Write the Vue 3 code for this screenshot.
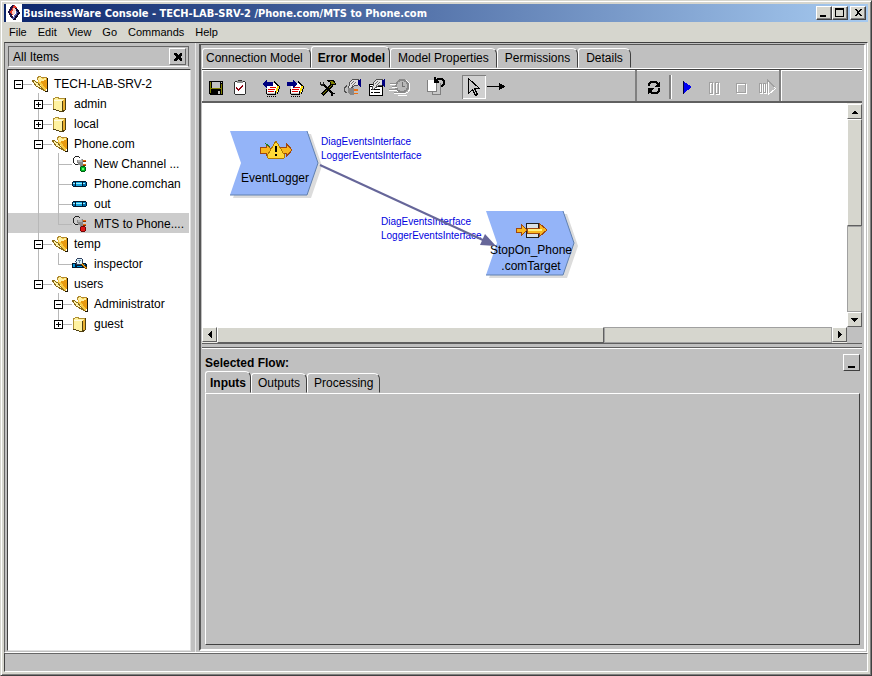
<script setup>
import { ref } from 'vue'

const menus = ['File', 'Edit', 'View', 'Go', 'Commands', 'Help']
const tabs = ['Connection Model', 'Error Model', 'Model Properties', 'Permissions', 'Details']
const flowTabs = ['Inputs', 'Outputs', 'Processing']
const activeTab = ref('Error Model')
const activeFlow = ref('Inputs')
const selected = ref('MTS to Phone....')

// guides: one entry per indent column; v = through line, end = last child, tee = child, none = blank
const tree = [
  { label: 'TECH-LAB-SRV-2', icon: 'open', box: 'minus', guides: ['root'] },
  { label: 'admin', icon: 'closed', box: 'plus', guides: ['none', 'tee'] },
  { label: 'local', icon: 'closed', box: 'plus', guides: ['none', 'tee'] },
  { label: 'Phone.com', icon: 'open', box: 'minus', guides: ['none', 'tee'] },
  { label: 'New Channel ...', icon: 'plug-on', guides: ['none', 'v', 'tee'] },
  { label: 'Phone.comchan', icon: 'pipe', guides: ['none', 'v', 'tee'] },
  { label: 'out', icon: 'pipe', guides: ['none', 'v', 'tee'] },
  { label: 'MTS to Phone....', icon: 'plug-off', guides: ['none', 'v', 'end'] },
  { label: 'temp', icon: 'open', box: 'minus', guides: ['none', 'tee'] },
  { label: 'inspector', icon: 'inspect', guides: ['none', 'v', 'end'] },
  { label: 'users', icon: 'open', box: 'minus', guides: ['none', 'end'] },
  { label: 'Administrator', icon: 'open', box: 'minus', guides: ['none', 'none', 'tee'] },
  { label: 'guest', icon: 'closed', box: 'plus', guides: ['none', 'none', 'end'] }
]

const toolGroups = [
  [{ id: 'save', name: 'Save' }, { id: 'check', name: 'Validate' }],
  [{ id: 'import', name: 'Import' }, { id: 'export', name: 'Export' }],
  [{ id: 'tools', name: 'Build' }, { id: 'connect', name: 'Connect' }, { id: 'props', name: 'Properties' }, { id: 'clock', name: 'Schedule' }],
  [{ id: 'revert', name: 'Revert' }],
  [{ id: 'pointer', name: 'Select', pressed: true }, { id: 'wire', name: 'Wire' }]
]
const runTools = [
  { id: 'play', name: 'Start' },
  { id: 'pause', name: 'Pause' },
  { id: 'stop', name: 'Stop' },
  { id: 'step', name: 'Step' }
]
</script>

<template>
  <svg class="sprite" aria-hidden="true">
    <symbol id="i-open" viewBox="0 0 18 18">
      <path d="M6 3l3-2 2 1 1 1 4-1v11l-1 3-6-4z" fill="#f8c840" />
      <path d="M9 5l7-2v12l-3-3z" fill="#e89a10" />
      <path d="M7 3l2-1 2 2 4-1v2l-7 2z" fill="#fff0a0" />
      <path d="M1 5l6 2 7 9-3-1-4-2z" fill="#fff4a8" />
      <path d="M1 5h1l5 3 3 4 4 4M1 5l4 6 9 5" fill="none" stroke="#8a6a18" />
      <path d="M6 5V3l3-2 2 2 5-1" fill="none" stroke="#b08a30" />
      <path d="M16 3v13h-2" fill="none" stroke="#201808" stroke-width="1" />
    </symbol>
    <symbol id="i-closed" viewBox="0 0 18 18">
      <path d="M2 4l4-2 3 2 5-1v12l-3 2-9-3z" fill="#fff2a0" />
      <path d="M2 14V4l4-2 3 2 5-1" fill="none" stroke="#b09030" />
      <path d="M11 6l3-3v12l-3 2z" fill="#e8b030" />
      <path d="M2 14l9 3M11 6v11M11 17l3-2V3" fill="none" stroke="#504010" />
      <path d="M3 5l8 1" fill="none" stroke="#fffbe0" />
    </symbol>
    <symbol id="i-plug" viewBox="0 0 18 18">
      <path d="M4 1h4v1H4zM3 2h1v1H3zM2 3h1v5H2zM3 8h1v1H3zM4 9h3v1H4zM8 2h1v1H8z" fill="#202020" />
      <path d="M6 5h4V4h2v8H9v-2H7V8H6z" fill="#888" />
      <path d="M7 5h3V4h1v3H7z" fill="#b4b4b4" />
      <path d="M12 5h3v1h-3zM12 9h3v1h-3z" fill="#f07010" />
      <path d="M12 6h3v1h-3zM12 10h3v1h-3z" fill="#803000" />
    </symbol>
    <symbol id="i-plug-on" viewBox="0 0 18 18">
      <use href="#i-plug" width="18" height="18" />
      <path d="M10 11h4v1h1v4h-1v1h-4v-1H9v-4h1z" fill="#006010" />
      <path d="M10 12h4v4h-4z" fill="#00b828" />
      <path d="M11 13h2v2h-2z" fill="#60ff60" />
    </symbol>
    <symbol id="i-plug-off" viewBox="0 0 18 18">
      <use href="#i-plug" width="18" height="18" />
      <path d="M10 11h4v1h1v4h-1v1h-4v-1H9v-4h1z" fill="#700808" />
      <path d="M10 12h4v4h-4z" fill="#e01818" />
    </symbol>
    <symbol id="i-pipe" viewBox="0 0 18 18">
      <path d="M2 6h13v1h1v4h-1v1H2v-1H1V7h1z" fill="#001830" />
      <path d="M2 7h2v4H2zM12 7h3v4h-3z" fill="#0070b0" />
      <path d="M5 7h6v4H5z" fill="#18a8e0" />
      <path d="M5 8h6v1H5zM2 8h2v1H2zM12 8h2v1h-2z" fill="#98f0ff" />
    </symbol>
    <symbol id="i-inspect" viewBox="0 0 18 18">
      <path d="M1 8h14v1h1v4H1z" fill="#001830" />
      <path d="M2 9h2v3H2zM12 9h2v3h-2zM6 11h5v1H6z" fill="#0098e0" />
      <circle cx="8.500" cy="6.500" r="3.500" fill="#d8f0f8" stroke="#304060" />
      <path d="M7 5h3v1H9v2H8V6H7z" fill="#6888a8" />
      <path d="M11 9l5 5" stroke="#805000" stroke-width="2" />
      <path d="M11 9l4 4" stroke="#ffb030" />
    </symbol>

    <symbol id="i-save" viewBox="0 0 24 24">
      <path d="M5 6h14v14H6l-1-1z" fill="#000" />
      <path d="M6 7h1v11H6zM17 9h1v10h-1zM7 13h10v1H7z" fill="#808000" />
      <path d="M8 7h8v6H8zM17 7h1v1h-1zM14 16h2v3h-2z" fill="#c0c0c0" />
    </symbol>
    <symbol id="i-check" viewBox="0 0 24 24">
      <path d="M7 6h10v1h1v12h-1v1H7v-1H6V7h1z" fill="#303030" />
      <path d="M7 7h10v12H7z" fill="#fff" />
      <path d="M9 6h6v2H9z" fill="#909090" />
      <path d="M10 5h4v1h-4z" fill="#303030" />
      <path d="M8 12h1v1h1v1h1v-1h1v-1h1v-1h1v-1h1v2h-1v1h-1v1h-1v1h-1v1h-1v-1H9v-1H8z" fill="#900010" />
    </symbol>
    <symbol id="i-sheet" viewBox="0 0 24 24">
      <path d="M8 8h9l2 3v7H8z" fill="#fff" />
      <path d="M15 6h1v1h1v1h1v1h1v1h1v1h-2v-1h-1V9h-1V8h-1zM7 14h1v5H7zM8 19h9v1H8z" fill="#000" />
      <path d="M8 21h1v1H8zM10 21h1v1h-1zM12 21h1v1h-1zM14 21h1v1h-1zM16 21h1v1h-1z" fill="#000" />
      <path d="M11 12h6v1h-6zM9 14h7v1H9zM9 16h6v1H9z" fill="#e00000" />
      <path d="M18 11h2v2h-1v3h-1v2h-1v1h-1v-3h1v-3h1z" fill="#ffe000" />
      <path d="M20 11h1v3h-1zM19 14h1v3h-1zM18 17h1v2h-1zM16 16h1v3h-1z" fill="#000" />
    </symbol>
    <symbol id="i-import" viewBox="0 0 24 24">
      <use href="#i-sheet" width="24" height="24" />
      <path d="M4 9l4-5v3h6v4H8v3z" fill="#000080" />
    </symbol>
    <symbol id="i-export" viewBox="0 0 24 24">
      <use href="#i-sheet" width="24" height="24" />
      <path d="M14 9l-4-5v3H4v4h6v3z" fill="#000080" />
    </symbol>
    <symbol id="i-tools" viewBox="0 0 24 24">
      <path d="M6 20L16 10" stroke="#000" stroke-width="3" />
      <path d="M7 19l9-9" stroke="#808000" />
      <path d="M11 5h6l3 4-1 1-2-1-2 1-1-3z" fill="#808000" stroke="#000" />
      <path d="M8 10l9 9" stroke="#000" stroke-width="2" />
      <path d="M4 7h1v2h2V7h1v3H7v1H5v-1H4z" fill="#202020" />
      <path d="M15 18h4v1h-2v2h-2z" fill="#000" />
    </symbol>
    <symbol id="i-hand" viewBox="0 0 24 24">
      <path d="M9 8l4-4h5v6l-4 1-4 3H8v-2l2-2z" fill="#e0e0e0" stroke="#505050" />
      <path d="M11 9l3-3M12 11l4-4" stroke="#707070" />
      <path d="M18 5l3-1v8h-1l-2-2z" fill="#000080" />
    </symbol>
    <symbol id="i-connect" viewBox="0 0 24 24">
      <use href="#i-hand" width="24" height="24" />
      <path d="M7 10H6v1H5v1H4v4h1v1h2" fill="none" stroke="#505050" />
      <path d="M8 13h6v7h-3l-3-2z" fill="#888" />
      <path d="M14 14h4v2h-4zM14 18h4v1h-4z" fill="#f07010" />
    </symbol>
    <symbol id="i-props" viewBox="0 0 24 24">
      <path d="M5 9h14v12H5z" fill="#000" />
      <path d="M6 12h12v8H6z" fill="#fff" />
      <path d="M7 14h2v1H7zM10 14h6v1h-6zM7 17h2v1H7zM10 17h6v1h-6z" fill="#000" />
      <path d="M6 10h3v1H6z" fill="#fff" />
      <use href="#i-hand" width="24" height="24" />
    </symbol>
    <symbol id="i-clock" viewBox="0 0 24 24">
      <circle cx="15" cy="12" r="7" fill="#b0b0b0" stroke="#fff" />
      <circle cx="14" cy="11" r="6" fill="#b8b8b8" stroke="#888" stroke-width="2" />
      <path d="M14 7v4l3 1" fill="none" stroke="#707070" />
      <path d="M2 8h6v1H2zM4 11h5v1H4zM1 14h8v1H1zM6 17h6v1H6z" fill="#909090" />
      <path d="M2 9h6v1H2zM4 12h5v1H4zM1 15h8v1H1zM6 18h6v1H6zM10 20h9v1h-9z" fill="#fff" />
    </symbol>
    <symbol id="i-revert" viewBox="0 0 24 24">
      <path d="M8 8h9v12H8z" fill="#808080" />
      <path d="M9 8h7v11H9z" fill="#c8c8c8" />
      <path d="M3 5h10v12H3z" fill="#808080" />
      <path d="M4 5h8v11H4z" fill="#fff" />
      <path d="M13 3h6v1h1v1h1v5h-1v1h-1v1h-2v-2h1V9h1V6h-1V5h-5z" fill="#000" />
      <path d="M10 2h2v2h1v1h1v1h1v2h-5z" fill="#000" />
    </symbol>
    <symbol id="i-pointer" viewBox="0 0 24 24">
      <path d="M6.500 3.500v15l4-4 3 6 2-1-3-6h5z" fill="#c8c8c8" stroke="#000" />
    </symbol>
    <symbol id="i-wire" viewBox="0 0 24 24">
      <path d="M1 11h13v1H1zM13 8l6 3v1l-6 3z" fill="#000" />
    </symbol>
    <symbol id="i-refresh" viewBox="0 0 24 24">
      <path d="M7 11V9l2-2h5l2 2M17 13v3l-2 2h-5l-2-2" fill="none" stroke="#000" stroke-width="2" />
      <path d="M18 6v6h-6zM6 19v-6h6z" fill="#000" />
    </symbol>
    <symbol id="i-play" viewBox="0 0 24 24">
      <path d="M8 6l9 6-9 7z" fill="#0000f0" />
      <path d="M8 6h1v13H8z" fill="#000040" />
    </symbol>
    <symbol id="i-pause" viewBox="0 0 24 24">
      <path d="M8.500 8.500h3v11h-3zM14.500 8.500h3v11h-3z" fill="none" stroke="#fff" />
      <path d="M7.500 7.500h3v11h-3zM13.500 7.500h3v11h-3z" fill="none" stroke="#a0a0a0" />
    </symbol>
    <symbol id="i-stop" viewBox="0 0 24 24">
      <path d="M8.500 9.500h9v9h-9z" fill="none" stroke="#fff" />
      <path d="M7.500 8.500h9v9h-9z" fill="none" stroke="#a0a0a0" />
    </symbol>
    <symbol id="i-step" viewBox="0 0 24 24">
      <path d="M4.500 9.500h2v9h-2zM8.500 9.500h2v9h-2z" fill="none" stroke="#fff" />
      <path d="M3.500 8.500h2v9h-2zM7.500 8.500h2v9h-2z" fill="none" stroke="#a0a0a0" />
      <path d="M12.500 6.500v13l7-6z" fill="none" stroke="#fff" />
      <path d="M11.500 18v-13l7 7" fill="none" stroke="#a0a0a0" />
    </symbol>
    <symbol id="i-alert" viewBox="0 0 34 20">
      <path d="M1 7h6V4l6 6-6 6v-3H1z" fill="#f8b820" stroke="#a04810" />
      <path d="M21 7h6V3l6 7-6 7v-4h-6z" fill="#f8b820" stroke="#a04810" />
      <path d="M6 3l5 4" stroke="#208020" />
      <path d="M17 1l9 15-1 2H9l-1-2z" fill="#ffd838" stroke="#b07800" stroke-linejoin="round" />
      <path d="M16 6h2v6h-2zM16 14h2v2h-2z" fill="#000" />
    </symbol>
    <symbol id="i-target" viewBox="0 0 34 20">
      <path d="M12 3h12v14H12z" fill="#d8e0e8" stroke="#202020" />
      <path d="M2 8h5V4l6 6-6 6v-4H2z" fill="#f8b820" stroke="#a04810" />
      <path d="M13 8h12V3l8 7-8 7v-4H13z" fill="#f8b820" stroke="#a04810" />
      <path d="M14 10h14" stroke="#fff080" stroke-width="2" />
    </symbol>
  </svg>

  <div class="window">
    <header class="titlebar">
      <svg class="logo" viewBox="0 0 16 18" aria-hidden="true">
        <rect width="16" height="18" fill="#fff" />
        <path d="M8 1l3 2-4 5-1 6-3-5z" fill="#e03828" />
        <path d="M7 1L3 8l4 7" fill="none" stroke="#201040" stroke-width="2" />
        <path d="M10 3l4 6-6 8-2-2 4-6z" fill="#5860b0" />
        <path d="M10 4l3 5-5 7" fill="none" stroke="#100830" stroke-width="2" />
        <path d="M8 3l2 3-2 6-2-3z" fill="#f8d0c8" />
      </svg>
      <h1>BusinessWare Console - TECH-LAB-SRV-2 /Phone.com/MTS to Phone.com</h1>
      <div class="controls">
        <button type="button" aria-label="Minimize"><svg viewBox="0 0 12 10"><path d="M2 7h6v2H2z" /></svg></button>
        <button type="button" aria-label="Maximize"><svg viewBox="0 0 12 10"><path d="M1 0h9v9H1zM2 2v6h7V2z" fill-rule="evenodd" /></svg></button>
        <button type="button" class="close" aria-label="Close"><svg viewBox="0 0 12 10"><path d="M2 1h2l2 2 2-2h2L7 4v1l3 3H8L6 6 4 8H2l3-3V4z" /></svg></button>
      </div>
    </header>

    <nav class="menubar">
      <button v-for="m in menus" :key="m" type="button">{{ m }}</button>
    </nav>

    <div class="body">
      <aside class="side">
        <div class="side-head">
          <span>All Items</span>
          <button type="button" aria-label="Close pane"><svg viewBox="0 0 10 10"><path d="M1 1h2l2 2 2-2h2v2L7 5l2 2v2H7L5 7 3 9H1V7l2-2-2-2z" /></svg></button>
        </div>
        <ul class="tree">
          <li v-for="n in tree" :key="n.label" :class="{ sel: n.label === selected }" @click="selected = n.label">
            <span v-for="(g, i) in n.guides" :key="i" class="guide" :class="g">
              <button v-if="n.box && i === n.guides.length - 1" type="button" class="box" :aria-label="'Toggle ' + n.label">
                <svg viewBox="0 0 9 9"><path d="M2 4h5v1H2z" /><path v-if="n.box === 'plus'" d="M4 2h1v5H4z" /></svg>
              </button>
            </span>
            <span class="icon"><svg><use :href="'#i-' + n.icon" /></svg></span>
            <span class="label">{{ n.label }}</span>
          </li>
        </ul>
      </aside>

      <main class="main">
        <div class="tabs" role="tablist">
          <button v-for="t in tabs" :key="t" type="button" role="tab" :aria-selected="t === activeTab" :class="{ on: t === activeTab }" @click="activeTab = t">{{ t }}</button>
        </div>

        <div class="editor">
          <div class="toolbar">
            <div class="tools">
              <div v-for="(g, i) in toolGroups" :key="i" class="group">
                <button v-for="t in g" :key="t.id" type="button" :class="{ pressed: t.pressed }" :aria-label="t.name"><svg><use :href="'#i-' + t.id" /></svg></button>
              </div>
            </div>
            <div class="run">
              <button type="button" aria-label="Refresh"><svg><use href="#i-refresh" /></svg></button>
              <span class="sep"></span>
              <button v-for="t in runTools" :key="t.id" type="button" :aria-label="t.name"><svg><use :href="'#i-' + t.id" /></svg></button>
            </div>
          </div>

          <div class="view">
            <div class="canvas">
              <div class="node logger">
                <svg class="shape" viewBox="0 0 92 68">
                  <path d="M3 3h78l11 32-11 32H3l11-32z" fill="#dcdcdc" />
                  <path d="M0 0h77l11 32-11 32H0l11-32z" fill="#94b4f8" />
                  <path d="M0 64h77l11-32L77 0" fill="none" stroke="#6080b0" />
                </svg>
                <svg class="glyph"><use href="#i-alert" /></svg>
                <span>EventLogger</span>
              </div>
              <div class="node target">
                <svg class="shape" viewBox="0 0 92 68">
                  <path d="M3 3h78l11 32-11 32H3l11-32z" fill="#dcdcdc" />
                  <path d="M0 0h77l11 32-11 32H0l11-32z" fill="#94b4f8" />
                  <path d="M0 64h77l11-32L77 0" fill="none" stroke="#6080b0" />
                </svg>
                <svg class="glyph"><use href="#i-target" /></svg>
                <span>StopOn_Phone<br />.comTarget</span>
              </div>
              <p class="ports from">DiagEventsInterface<br />LoggerEventsInterface</p>
              <p class="ports to">DiagEventsInterface<br />LoggerEventsInterface</p>
              <svg class="link" viewBox="0 0 180 86" aria-hidden="true">
                <path d="M1 1l165 76" stroke="#666699" stroke-width="2" />
                <path d="M177 82l-16-1 5-11z" fill="#666699" />
              </svg>
            </div>
            <div class="vbar">
              <button type="button" aria-label="Scroll up"><svg viewBox="0 0 8 8"><path d="M0 6l3-3h1l3 3z" /></svg></button>
              <div class="thumb"></div>
              <div class="track"></div>
              <button type="button" aria-label="Scroll down"><svg viewBox="0 0 8 8"><path d="M0 2h7L4 6H3z" /></svg></button>
            </div>
            <div class="hbar">
              <button type="button" aria-label="Scroll left"><svg viewBox="0 0 8 8"><path d="M6 0v7L2 4V3z" /></svg></button>
              <div class="thumb"></div>
              <div class="track"></div>
              <button type="button" aria-label="Scroll right"><svg viewBox="0 0 8 8"><path d="M2 0v7l4-3V3z" /></svg></button>
            </div>
          </div>

          <section class="flow">
            <div class="flow-head">
              <h2>Selected Flow:</h2>
              <button type="button" aria-label="Collapse"><svg viewBox="0 0 10 10"><path d="M1 8h7v2H1z" /></svg></button>
            </div>
            <div class="tabs inner" role="tablist">
              <button v-for="t in flowTabs" :key="t" type="button" role="tab" :aria-selected="t === activeFlow" :class="{ on: t === activeFlow }" @click="activeFlow = t">{{ t }}</button>
            </div>
            <div class="flow-body" role="tabpanel"></div>
          </section>
        </div>
      </main>
    </div>

    <footer class="status"></footer>
  </div>
</template>

<style>
body {
  background: #d6d6ce;
}
</style>

<style scoped>
* {
  box-sizing: border-box;
}
button {
  margin: 0;
  padding: 0;
  border: 0;
  background: none;
  font: inherit;
  color: inherit;
}
svg {
  display: block;
  shape-rendering: crispEdges;
}
.sprite {
  position: absolute;
  width: 0;
  height: 0;
}
.window {
  display: flex;
  flex-direction: column;
  min-height: 100vh;
  padding: 3px;
  border: 1px solid;
  border-color: #d6d6ce #404040 #404040 #d6d6ce;
  box-shadow: inset 1px 1px #fff, inset -1px -1px #808080;
  background: #d6d6ce;
  font-family: "Liberation Sans", Arial, sans-serif;
  font-size: 12px;
  line-height: 16px;
  color: #000;
}
.titlebar {
  display: flex;
  align-items: center;
  height: 18px;
  padding-right: 2px;
  background: linear-gradient(90deg, #0a246a, #a6caf0);
  color: #fff;
}
.logo {
  width: 16px;
  height: 18px;
  margin-left: 2px;
}
.titlebar h1 {
  flex: 1;
  margin: 0 0 0 1px;
  font: bold 11px/19px "DejaVu Sans Condensed", "DejaVu Sans", sans-serif;
  white-space: nowrap;
}
.controls {
  display: flex;
}
.controls button {
  display: grid;
  place-items: center;
  width: 16px;
  height: 14px;
  background: #d6d6ce;
  border: 1px solid;
  border-color: #fff #404040 #404040 #fff;
  box-shadow: inset -1px -1px #808080;
}
.controls svg {
  width: 12px;
  height: 10px;
}
.controls .close {
  margin-left: 2px;
}
.menubar {
  display: flex;
  gap: 11px;
  height: 20px;
  padding-left: 5px;
  font-size: 11px;
  line-height: 20px;
}
.body {
  display: flex;
  flex: 1;
  border: 1px solid;
  border-color: #404040 #fff #fff #666;
  background: #c0c0c0;
}
.side {
  display: flex;
  flex-direction: column;
  width: 191px;
  padding: 3px 4px 1px 2px;
  border-right: 1px solid #e8e8e8;
}
.side-head {
  display: flex;
  align-items: center;
  justify-content: space-between;
  height: 21px;
  margin: 0 2px 2px 1px;
  padding: 0 2px 0 4px;
  border: 1px solid #666;
  border-bottom-color: #fff;
}
.side-head button {
  display: grid;
  place-items: center;
  width: 17px;
  height: 17px;
  border: 1px solid;
  border-color: #fff #666 #666 #fff;
}
.side-head svg {
  width: 10px;
  height: 10px;
}
.tree {
  flex: 1;
  margin: 0;
  padding: 3px 1px 0 0;
  list-style: none;
  background: #fff;
  border: 1px solid;
  border-color: #404040 #e0e0e0 #e0e0e0 #404040;
}
.tree li {
  display: flex;
  height: 20px;
  line-height: 23px;
  white-space: nowrap;
}
.tree .sel {
  background: #cccccc;
}
.guide {
  position: relative;
  width: 20px;
  flex: none;
  display: grid;
  place-items: center;
  padding-top: 2px;
}
.guide.v,
.guide.tee {
  background: linear-gradient(#b8b8b8, #b8b8b8) 10px 0 / 1px 100% no-repeat;
}
.guide.end {
  background: linear-gradient(#b8b8b8, #b8b8b8) 10px 0 / 1px 11px no-repeat;
}
.guide.tee::after,
.guide.end::after,
.guide.root::after {
  content: "";
  position: absolute;
  left: 10px;
  top: 11px;
  width: 14px;
  height: 1px;
  background: #b8b8b8;
}
.box {
  z-index: 1;
  width: 9px;
  height: 9px;
  background: #fff;
}
.box svg {
  width: 9px;
  height: 9px;
  outline: 1px solid #000;
  outline-offset: -1px;
}
.icon {
  width: 26px;
  flex: none;
  padding: 2px 0 0 3px;
}
.icon svg {
  position: relative;
  width: 18px;
  height: 18px;
}
.main {
  display: flex;
  flex: 1;
  flex-direction: column;
  min-width: 0;
  margin: 1px 1px 1px 3px;
  padding: 1px 2px 1px 1px;
  border: 2px solid;
  border-color: #555 #fff #fff #555;
  border-top-width: 1px;
}
.tabs {
  display: flex;
  align-items: flex-end;
  height: 22px;
}
.tabs button {
  height: 20px;
  padding: 0 7px;
  border: 1px solid;
  border-color: #fff #404040 transparent #fff;
  border-radius: 3px 6px 0 0;
  line-height: 19px;
  white-space: nowrap;
}
.tabs button:first-child {
  padding-left: 3px;
}
.tabs .on {
  height: 22px;
  padding: 0 4px 0 6px;
  font-weight: bold;
  line-height: 22px;
}
.tabs.inner button {
  padding: 0 6px;
}
.tabs.inner .on {
  padding: 0 4px;
}
.editor {
  display: flex;
  flex: 1;
  flex-direction: column;
  border-top: 1px solid #fff;
}
.toolbar {
  display: flex;
  height: 34px;
  border-top: 1px solid #404040;
  border-bottom: 2px solid #606060;
  box-shadow: inset 1px 1px #fff;
}
.tools {
  display: flex;
  flex: 1;
  align-items: center;
  gap: 7px;
  padding: 2px 0 0 2px;
}
.group {
  display: flex;
}
.group:nth-child(3) {
  margin-left: 2px;
}
.group:nth-child(4) {
  margin: 0 7px 0 5px;
}
.toolbar button,
.toolbar svg {
  width: 24px;
  height: 24px;
}
.toolbar .pressed {
  background: #d0d0d0;
  box-shadow: inset 1px 1px #808080, inset -1px -1px #fff;
}
.run {
  display: flex;
  align-items: center;
  gap: 3px;
  width: 227px;
  padding: 2px 0 0 5px;
  border-left: 2px solid;
  border-image: linear-gradient(90deg, #808080 50%, #fff 50%) 2;
  border-width: 0 0 0 2px;
  background:
    linear-gradient(#808080, #808080) 142px 0 / 2px 100% no-repeat,
    linear-gradient(#fff, #fff) 144px 0 / 1px 100% no-repeat;
}
.sep {
  width: 3px;
  height: 24px;
  border: solid;
  border-width: 0 1px 0 2px;
  border-color: #808080 #fff #808080 #808080;
}
.view {
  display: grid;
  grid-template: minmax(224px, auto) 16px / minmax(0, 1fr) 15px;
  border-bottom: 1px solid #606060;
}
.canvas {
  position: relative;
  overflow: hidden;
  background: #fff;
}
.vbar,
.hbar {
  display: flex;
  background: #ecebe6;
}
.vbar {
  flex-direction: column;
  padding-top: 1px;
}
.vbar button,
.hbar button {
  display: grid;
  place-items: center;
  width: 15px;
  height: 15px;
  flex: none;
}
.vbar svg,
.hbar svg {
  width: 8px;
  height: 8px;
}
.vbar button,
.hbar button,
.thumb {
  background: #d6d6ce;
  border: 1px solid;
  border-color: #fff #606060 #606060 #fff;
}
.thumb {
  flex: 107;
}
.track {
  flex: 85;
  background: #d6d6ce;
  border: 1px solid #a0a0a0;
}
.hbar .thumb {
  flex: 388;
}
.hbar .track {
  flex: 228;
}
.node {
  position: absolute;
  width: 92px;
  height: 68px;
  text-align: center;
}
.logger {
  left: 28px;
  top: 28px;
}
.target {
  left: 284px;
  top: 108px;
}
.shape {
  position: absolute;
  width: 92px;
  height: 68px;
  shape-rendering: auto;
}
.glyph {
  position: relative;
  width: 34px;
  height: 20px;
  margin: 9px auto 10px 29px;
}
.target .glyph {
  margin-bottom: 2px;
  margin-left: 28px;
}
.node span {
  position: relative;
  display: block;
  margin-right: 2px;
  white-space: nowrap;
}
.ports {
  position: absolute;
  margin: 0;
  font-size: 10px;
  line-height: 14px;
  color: #0000e0;
  white-space: nowrap;
}
.from {
  left: 119px;
  top: 32px;
}
.to {
  left: 179px;
  top: 112px;
}
.link {
  position: absolute;
  left: 117px;
  top: 61px;
  width: 180px;
  height: 86px;
  shape-rendering: auto;
}
.flow {
  display: flex;
  flex: 1;
  flex-direction: column;
  margin-top: 3px;
  padding: 6px 2px 3px 3px;
  border-top: 1px solid #606060;
  box-shadow: inset 0 1px #fff;
}
.flow-head {
  display: flex;
  justify-content: space-between;
  height: 17px;
}
.flow-head h2 {
  margin: 0;
  font-size: 12px;
  line-height: 18px;
}
.flow-head button {
  width: 17px;
  height: 17px;
  padding: 2px 3px;
  border: 1px solid;
  border-color: #fff #404040 #404040 #fff;
}
.flow-head svg {
  width: 10px;
  height: 10px;
}
.flow-body {
  flex: 1;
  border: 1px solid;
  border-color: #fff #404040 #404040 #fff;
}
.status {
  height: 19px;
  border: 1px solid;
  border-color: #666 #fff #fff #404040;
  background: #c0c0c0;
}
</style>
